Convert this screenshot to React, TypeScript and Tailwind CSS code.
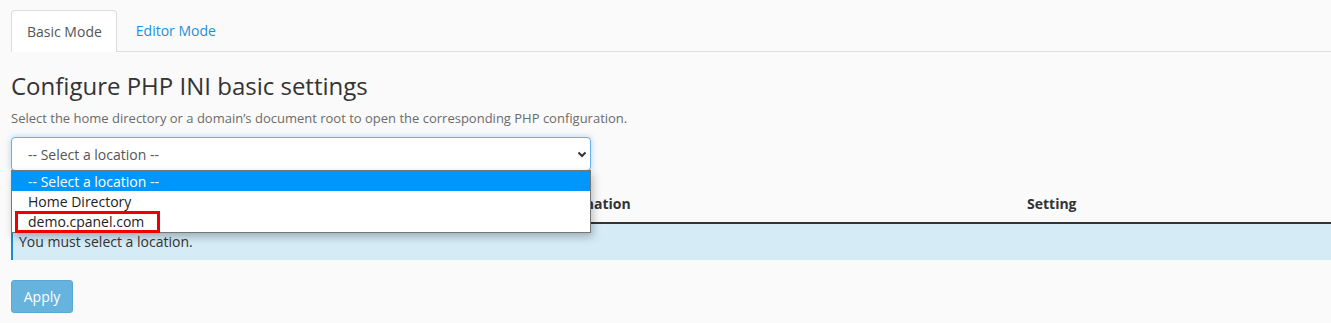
export default function App() {
  return (
    <div className="min-h-[323px] w-full overflow-hidden bg-[#fafafa] pl-[11px] pt-[10px] font-['Open_Sans',sans-serif] text-[14px] text-[#333]">
      {/* tabs */}
      <div className="flex border-b border-[#ddd]">
        <div className="-mb-px flex h-[42px] items-center rounded-t-[4px] border border-b-0 border-[#ddd] bg-white pl-[15px] pr-[14px] text-[#555]">
          Basic Mode
        </div>
        <div className="flex h-[41px] items-center px-[19px] text-[#1e90d6]">Editor Mode</div>
      </div>

      <h2 className="mt-[21px] text-[24px] leading-[26px] text-[#333]">Configure PHP INI basic settings</h2>
      <p className="mt-[10px] text-[13px] leading-[19px] text-[#6b6b6b]">
        Select the home directory or a domain’s document root to open the corresponding PHP configuration.
      </p>

      <div className="relative mt-[9px]">
        <div className="flex h-[34px] w-[580px] items-center justify-between rounded-[4px] border border-[#66afe9] bg-white pl-[16px] pr-[3px] text-[#555] shadow-[0_0_6px_rgba(102,175,233,0.5)]">
          <span>-- Select a location --</span>
          <svg width="10" height="8" viewBox="0 0 10 8">
            <path d="M1.5 2.5 L5 6 L8.5 2.5" fill="none" stroke="#333" strokeWidth="2" />
          </svg>
        </div>

        {/* open dropdown */}
        <div className="absolute left-0 top-[33px] z-10 w-[580px] border border-[#767676] bg-white shadow-[2px_4px_8px_rgba(0,0,0,0.25)]">
          <div className="h-[20px] bg-[#0096fb] pl-[16px] pt-[1px] leading-[20px] text-white">-- Select a location --</div>
          <div className="h-[20px] pl-[16px] pt-[1px] leading-[20px] text-[#222]">Home Directory</div>
          <div className="h-[21px] pl-[16px] pt-[1px] leading-[20px] text-[#222]">demo.cpanel.com</div>
          <div className="absolute left-[3px] top-[40px] h-[22px] w-[145px] border-[3px] border-[#ee0000]" />
        </div>

        {/* table */}
        <table className="mt-[15px] w-full border-collapse">
          <thead>
            <tr className="border-b-2 border-[#333]">
              <th className="w-[526px] px-[8px] py-[8px] text-left text-[14px] font-bold leading-[20px]">PHP Directive</th>
              <th className="w-[481px] px-[8px] py-[8px] text-left text-[14px] font-bold leading-[20px]">Information</th>
              <th className="px-[8px] py-[8px] text-left text-[14px] font-bold leading-[20px]">Setting</th>
            </tr>
          </thead>
          <tbody>
            <tr>
              <td colSpan={3} className="h-[37px] border-l-2 border-[#1b8ccc] bg-[#d5ecf6] px-[6px] pt-[8px] align-top leading-[20px] text-[#333]">
                You must select a location.
              </td>
            </tr>
          </tbody>
        </table>
      </div>

      <button className="mt-[20px] h-[33px] w-[62px] rounded-[3px] border border-[#5aa8d6] bg-[#66b3de] text-[14px] text-white">
        Apply
      </button>
    </div>
  )
}
